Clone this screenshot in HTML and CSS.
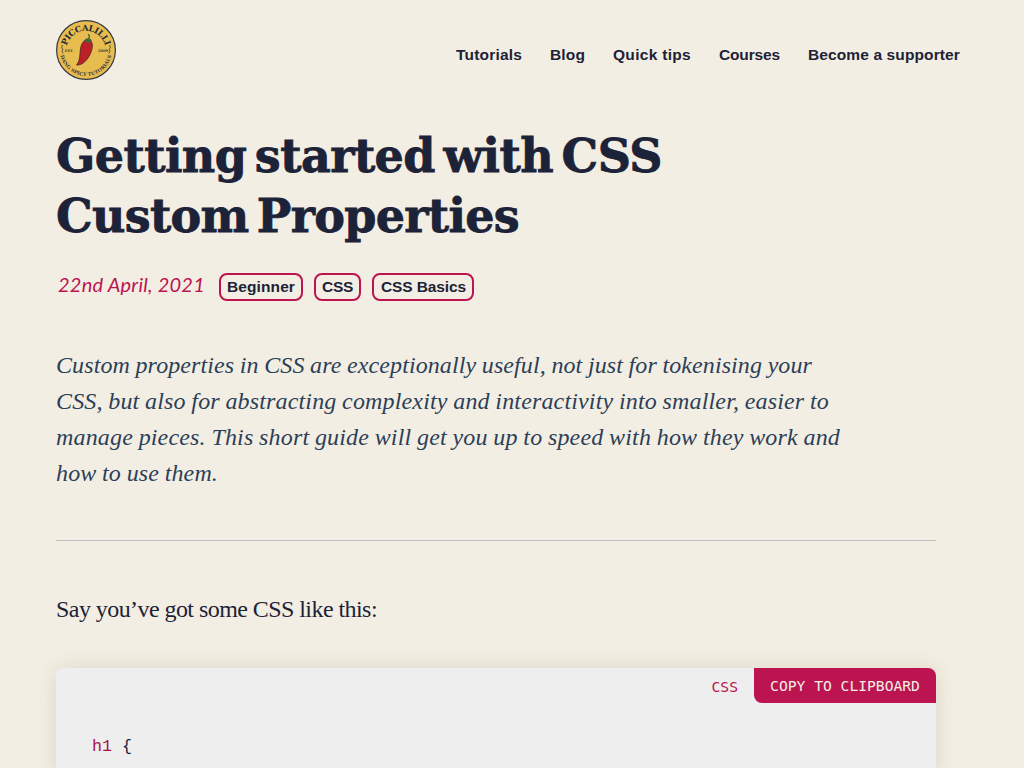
FILE: index.html
```html
<!DOCTYPE html>
<html lang="en">
<head>
<meta charset="utf-8">
<title>Getting started with CSS Custom Properties</title>
<link rel="stylesheet" href="styles.css">
</head>
<body>
<header class="site-head">
  <a class="brand" aria-label="Piccalilli">
    <svg width="60" height="60" viewBox="0 0 60 60">
      <defs>
        <path id="arc-top" d="M10.600 34a19.700 19.700 0 1 1 38.800 0"/>
        <path id="arc-bottom" d="M4 30a26 26 0 0 0 52 0"/>
      </defs>
      <circle cx="30" cy="30" r="29.4" fill="#e8bd50" stroke="#353841" stroke-width="1.2"/>
      <text class="logo-name"><textPath href="#arc-top" startOffset="50%" text-anchor="middle" textLength="52">PICCALILLI</textPath></text>
      <text class="logo-tag"><textPath href="#arc-bottom" startOffset="50%" text-anchor="middle" textLength="70">DANG SPICY TUTORIALS</textPath></text>
      <text class="logo-year" x="8.7" y="31.5">EST.</text>
      <text class="logo-year" x="42" y="31.5">2009</text>
      <path d="M6.5 25q-1.8 2.5.3 4.5-1.6 2 .4 4M53.5 25q1.8 2.500-.3 4.500 1.600 2-.4 4" fill="none" stroke="#5c5038" stroke-width="1"/>
      <path d="M27.500 21.500C30 18.500 34.500 19 36 23c1.400 5-1.700 12.500-5.500 17C27.500 43.500 23.500 45.500 20.500 45c2.500-2.500 3.200-6.500 3.500-11.500.3-4.500.8-9 3.500-12z" fill="#bb2027" stroke="#48242b" stroke-width=".8"/>
      <path d="M28 21.500q.5-3 4-3.300c2.700 0 4.300 2 4 4.800l-2.300-1.500-1.700 1.700-1.600-1.800z" fill="#3d663c"/>
      <path d="M32.700 19q1.600-2.500-.5-4.800" fill="none" stroke="#3c6333" stroke-width="1.200"/>
    </svg>
  </a>
  <nav class="nav">
    <a data-w="66">Tutorials</a><a data-w="35">Blog</a><a data-w="78">Quick tips</a><a data-w="61">Courses</a><a data-w="152">Become a supporter</a>
  </nav>
</header>
<main class="post">
  <h1 class="title"><span data-w="606">Getting started with CSS</span><br><span data-w="463">Custom Properties</span></h1>
  <div class="meta">
    <time data-w="147">22nd April, 2021</time>
    <a class="tag tag-beginner"><span data-w="68">Beginner</span></a><a class="tag tag-css"><span data-w="31">CSS</span></a><a class="tag tag-basics"><span data-w="85">CSS Basics</span></a>
  </div>
  <p class="lead"><span data-w="756">Custom properties in CSS are exceptionally useful, not just for tokenising your</span><br><span data-w="773">CSS, but also for abstracting complexity and interactivity into smaller, easier to</span><br><span data-w="784">manage pieces. This short guide will get you up to speed with how they work and</span><br><span data-w="162">how to use them.</span></p>
  <hr class="rule">
  <p class="copy"><span data-w="321">Say you’ve got some CSS like this:</span></p>
  <section class="code">
    <div class="code-bar"><span class="lang">CSS</span><button class="copy-btn">COPY TO CLIPBOARD</button></div>
    <pre class="source"><span class="selector">h1</span> {</pre>
  </section>
</main>
<script src="fit.js"></script>
</body>
</html>
```
FILE: fit.js
```js
// Spread each marked line of text to its intended measure.
document.querySelectorAll('[data-w]').forEach(function (el) {
  var range = document.createRange();
  range.selectNodeContents(el);
  var width = range.getBoundingClientRect().width;
  var gap = (Number(el.dataset.w) - width) / el.textContent.length;
  el.style.letterSpacing = gap + 'px';
});
```
FILE: styles.css
```css
* { box-sizing: border-box; }
body { margin: 0; height: 768px; overflow: hidden; background: #f3eee3; color: #1c2237; }
.site-head { display: flex; justify-content: space-between; height: 100px; padding: 20px 64px 0 56px; }
.brand { width: 60px; height: 60px; }
.brand svg { display: block; }
.logo-name { font: bold 8.5px "DejaVu Serif", serif; fill: #252c37; }
.logo-tag { font: bold 4.8px "DejaVu Serif", serif; fill: #373a3c; }
.logo-year { font: bold 3.6px "DejaVu Serif", serif; fill: #403e38; }
.nav { display: flex; gap: 28px; padding-top: 24px; font: bold 15.5px/22px "Liberation Sans", sans-serif; white-space: nowrap; }
.post { width: 936px; padding-left: 56px; }
.title { margin: 26px 0 0; font: bold 46px/60px "DejaVu Serif", serif; word-spacing: -7px; white-space: nowrap; -webkit-text-stroke: .8px #1c2237; }
.meta { display: flex; height: 28px; margin-top: 27px; padding-left: 2px; }
.meta time { width: 161px; font: italic 20px/23px Lato, sans-serif; color: #bc1450; white-space: nowrap; }
.tag { height: 28px; margin-right: 11px; padding: 0 6px; border: 2px solid #bc1450; border-radius: 8px; font: bold 15.5px/24px "Liberation Sans", sans-serif; white-space: nowrap; }
.tag-beginner { width: 84px; }
.tag-css { width: 47px; }
.tag-basics { width: 102px; padding-left: 7px; }
.lead { margin: 46px 0 0; font: italic 24px/36px "Liberation Serif", serif; word-spacing: -.5px; color: #2c3f58; white-space: nowrap; }
.rule { height: 1px; margin: 49px 0 0; border: 0; background: #bbc0cb; }
.copy { margin: 50px 0 0; font: 24px/36px "Liberation Serif", serif; }
.code { height: 100px; margin-top: 41px; background: #eee; border-radius: 8px 8px 0 0; box-shadow: 0 0 20px rgba(70, 55, 25, .12), 0 20px 20px rgba(70, 55, 25, .03); }
.code-bar { display: flex; justify-content: flex-end; height: 35px; font: 14.65px/35px "DejaVu Sans Mono", monospace; }
.lang { padding: 1px 16px 0 0; color: #bc1450; }
.copy-btn { width: 182px; height: 35px; padding: 0; border: 0; border-radius: 0 8px 0 8px; background: #bc1450; color: #f3eee3; font: inherit; }
.source { margin: 32px 0 0 36px; font: 16.67px/24px "Liberation Mono", monospace; }
.selector { color: #a71349; }
```
